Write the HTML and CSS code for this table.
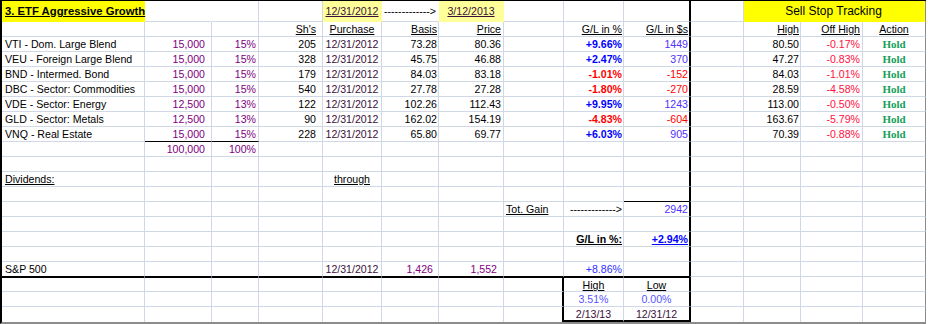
FILE: index.html
```html
<!DOCTYPE html>
<html>
<head>
<meta charset="utf-8">
<link rel="stylesheet" href="styles.css">
</head>
<body>
<div class="sheet">
  <div class="row top"><div class="title">3. ETF Aggressive Growth</div><div class="nr"></div><div></div><div></div><div class="ly dt u">12/31/2012</div><div class="l arrow">-------------&gt;</div><div class="ly c dt u">3/12/2013</div><div></div><div></div><div></div><div></div><div class="sst">Sell Stop Tracking</div></div>
  <div class="row hd"><div></div><div></div><div></div><div class="u">Sh's</div><div class="u">Purchase</div><div class="u">Basis</div><div class="u">Price</div><div></div><div class="u">G/L in %</div><div class="u">G/L in $s</div><div></div><div class="u">High</div><div class="u">Off High</div><div class="u">Action</div></div>
  <div class="row"><div>VTI - Dom. Large Blend</div><div class="pu">15,000</div><div class="pu">15%</div><div>205</div><div class="dt">12/31/2012</div><div>73.28</div><div>80.36</div><div></div><div class="pos">+9.66%</div><div class="vpos">1449</div><div></div><div>80.50</div><div class="off">-0.17%</div><div class="hold">Hold</div></div>
  <div class="row"><div>VEU - Foreign Large Blend</div><div class="pu">15,000</div><div class="pu">15%</div><div>328</div><div class="dt">12/31/2012</div><div>45.75</div><div>46.88</div><div></div><div class="pos">+2.47%</div><div class="vpos">370</div><div></div><div>47.27</div><div class="off">-0.83%</div><div class="hold">Hold</div></div>
  <div class="row"><div>BND - Intermed. Bond</div><div class="pu">15,000</div><div class="pu">15%</div><div>179</div><div class="dt">12/31/2012</div><div>84.03</div><div>83.18</div><div></div><div class="neg">-1.01%</div><div class="vneg">-152</div><div></div><div>84.03</div><div class="off">-1.01%</div><div class="hold">Hold</div></div>
  <div class="row"><div>DBC - Sector: Commodities</div><div class="pu">15,000</div><div class="pu">15%</div><div>540</div><div class="dt">12/31/2012</div><div>27.78</div><div>27.28</div><div></div><div class="neg">-1.80%</div><div class="vneg">-270</div><div></div><div>28.59</div><div class="off">-4.58%</div><div class="hold">Hold</div></div>
  <div class="row"><div>VDE - Sector: Energy</div><div class="pu">12,500</div><div class="pu">13%</div><div>122</div><div class="dt">12/31/2012</div><div>102.26</div><div>112.43</div><div></div><div class="pos">+9.95%</div><div class="vpos">1243</div><div></div><div>113.00</div><div class="off">-0.50%</div><div class="hold">Hold</div></div>
  <div class="row"><div>GLD - Sector: Metals</div><div class="pu">12,500</div><div class="pu">13%</div><div>90</div><div class="dt">12/31/2012</div><div>162.02</div><div>154.19</div><div></div><div class="neg">-4.83%</div><div class="vneg">-604</div><div></div><div>163.67</div><div class="off">-5.79%</div><div class="hold">Hold</div></div>
  <div class="row"><div>VNQ - Real Estate</div><div class="pu tot">15,000</div><div class="pu tot">15%</div><div>228</div><div class="dt">12/31/2012</div><div>65.80</div><div>69.77</div><div></div><div class="pos">+6.03%</div><div class="vpos">905</div><div></div><div>70.39</div><div class="off">-0.88%</div><div class="hold">Hold</div></div>
  <div class="row"><div></div><div class="pu">100,000</div><div class="pu">100%</div><div></div><div></div><div></div><div></div><div></div><div></div><div></div><div></div><div></div><div></div><div></div></div>
  <div class="row"><div></div><div></div><div></div><div></div><div></div><div></div><div></div><div></div><div></div><div></div><div></div><div></div><div></div><div></div></div>
  <div class="row"><div class="u">Dividends:</div><div></div><div></div><div></div><div class="u">through</div><div></div><div></div><div></div><div></div><div></div><div></div><div></div><div></div><div></div></div>
  <div class="row"><div></div><div></div><div></div><div></div><div></div><div></div><div></div><div></div><div></div><div class="tot"></div><div></div><div></div><div></div><div></div></div>
  <div class="row"><div></div><div></div><div></div><div></div><div></div><div></div><div></div><div class="u gain">Tot. Gain</div><div class="l arrow2">-------------&gt;</div><div class="vpos">2942</div><div></div><div></div><div></div><div></div></div>
  <div class="row"><div></div><div></div><div></div><div></div><div></div><div></div><div></div><div></div><div></div><div></div><div></div><div></div><div></div><div></div></div>
  <div class="row"><div></div><div></div><div></div><div></div><div></div><div></div><div></div><div></div><div class="b u">G/L in %:</div><div class="pos u">+2.94%</div><div></div><div></div><div></div><div></div></div>
  <div class="row"><div></div><div></div><div></div><div></div><div></div><div></div><div></div><div></div><div></div><div></div><div></div><div></div><div></div><div></div></div>
  <div class="row sp"><div>S&amp;P 500</div><div></div><div></div><div></div><div class="dt">12/31/2012</div><div class="pu">1,426</div><div class="pu">1,552</div><div></div><div class="blu">+8.86%</div><div></div><div></div><div></div><div></div><div></div></div>
  <div class="row hl"><div></div><div></div><div></div><div></div><div></div><div></div><div></div><div class="bl"></div><div class="c u">High</div><div class="c u">Low</div><div></div><div></div><div></div><div></div></div>
  <div class="row"><div></div><div></div><div></div><div></div><div></div><div></div><div></div><div class="bl"></div><div class="c lb">3.51%</div><div class="c lb">0.00%</div><div></div><div></div><div></div><div></div></div>
  <div class="row last"><div></div><div></div><div></div><div></div><div></div><div></div><div></div><div class="bl"></div><div class="c dt bb">2/13/13</div><div class="c dt bb">12/31/12</div><div></div><div></div><div></div><div></div></div>
</div>
</body>
</html>
```
FILE: styles.css
```css
* { box-sizing: border-box; }

body {
  margin: 0;
  background: #fff;
  font-family: "Liberation Sans", Arial, sans-serif;
  font-size: 10.6px;
  color: #000;
}

.sheet {
  display: grid;
  width: 926px;
  grid-template-columns: 143px 67px 47px 64px 59px 57px 65px 60px 60px 66px 54px 57px 62px 63px;
  grid-template-rows: 21px repeat(20, 15px);
  border-top: 1px solid #000;
  border-left: 2px solid #000;
  border-bottom: 2px solid #8c8c8c;
}

.row { display: contents; }

.row > div {
  border-right: 1px solid #d0d7e5;
  border-bottom: 1px solid #d0d7e5;
  line-height: 14px;
  white-space: nowrap;
  padding: 0 2px 0 3px;
}

.top > div { line-height: 20px; }

/* column alignment */
.row > :nth-child(2) { text-align: right; padding-right: 6px; }
.row > :nth-child(3) { text-align: right; padding-right: 2px; }
.row > :nth-child(4) { text-align: right; padding-right: 6px; }
.row > :nth-child(5) { text-align: center; padding: 0; }
.row > :nth-child(6) { text-align: right; padding-right: 1px; }
.row > :nth-child(7) { text-align: right; padding-right: 2px; }
.row > :nth-child(9) { text-align: right; padding-right: 1px; }
.row > :nth-child(10) { text-align: right; padding-right: 1px; border-right-color: #000; }
.row > :nth-child(11) { border-left: 1px solid #000; }
.row > :nth-child(12) { text-align: right; padding-right: 1px; }
.row > :nth-child(13) { text-align: right; padding-right: 2px; }
.row > :nth-child(14) { text-align: center; padding: 0; border-right-color: #8c8c8c; }

.hd > div { text-align: center; padding: 0; }
.sp > :nth-child(6) { padding-right: 5px; }
.sp > :nth-child(7) { padding-right: 6px; }
.sp > :nth-child(-n+10) { border-bottom-color: #000; }
.hl > :nth-child(-n+10) { border-top: 1px solid #000; }
.last > div { border-bottom: none; }

.row > .c { text-align: center; padding: 0; }
.row > .l { text-align: left; }
.row > .gain { padding-left: 2px; }
.row > .arrow { padding-left: 2px; border-right-color: transparent; }
.row > .arrow2 { padding-left: 6px; }

.row > .title {
  background: #ff0;
  font-size: 11.3px;
  font-weight: bold;
  text-decoration: underline;
  border-right: none;
  border-bottom-color: transparent;
}
.row > .nr { border-right-color: transparent; }
.row > .ly {
  background: #ffff99;
  border-right-color: transparent;
  border-bottom-color: transparent;
}
.row > .sst {
  grid-column: span 3;
  background: #ff0;
  text-align: center;
  font-size: 12px;
  padding: 0 2px 0 0;
  border-bottom-color: transparent;
  border-right-color: #8c8c8c;
}

.row > .tot { border-bottom-color: #000; }
.row > .bl { border-right: 2px solid #000; }
.row > .bb { border-bottom: 2px solid #000; }

.u { text-decoration: underline; }
.b { font-weight: bold; }
.pu { color: #800080; }
.dt { color: #3a103a; }
.pos { color: #0000ff; font-weight: bold; }
.neg { color: #ff0000; font-weight: bold; }
.vpos { color: #5030ff; }
.vneg { color: #ff0000; }
.off { color: #ff1040; }
.blu { color: #3030ff; }
.lb { color: #5555ff; }
.hold {
  font-family: "Liberation Serif", "Times New Roman", serif;
  font-weight: bold;
  font-size: 11px;
  color: #14a05a;
}
```
